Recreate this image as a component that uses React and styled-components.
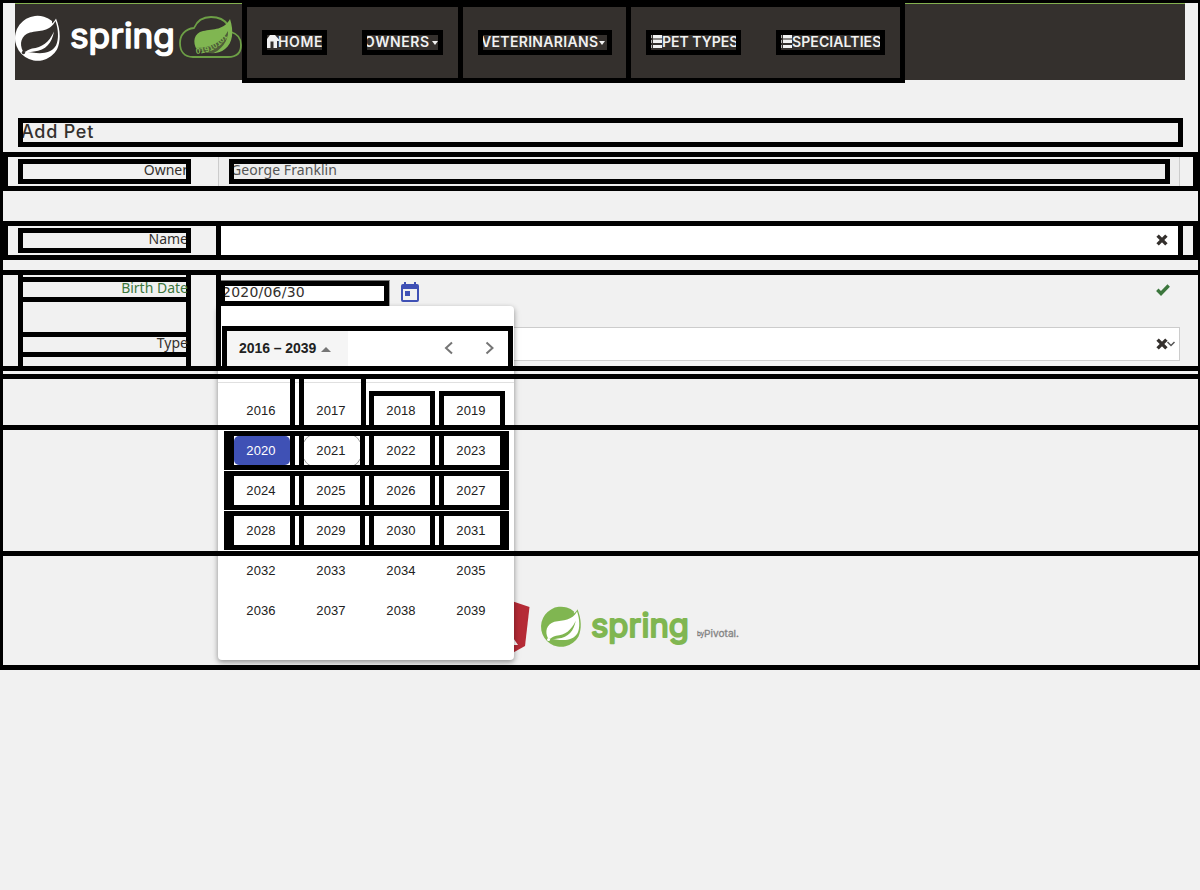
import React from "react";
import styled, { createGlobalStyle, css } from "styled-components";

const Global = createGlobalStyle`
  * { box-sizing: border-box; }
  body { margin: 0; background: #f1f1f1; font-family: "Noto Sans", sans-serif; font-size: 14px; color: #34302d; overflow: hidden; }
`;

const Page = styled.div`
  width: 1200px;
  height: 890px;
`;

const Frame = styled.main`
  position: relative;
  display: flex;
  flex-direction: column;
  height: 670px;
  border: solid #000;
  border-width: 3px 2px 5px 3px;
`;

const Header = styled.header`
  display: flex;
  align-items: flex-start;
  width: 1170px;
  height: 77px;
  flex: none;
  margin-left: 12px;
  border-top: 1px solid #84b04f;
  background: #34302d;
`;

const Brand = styled.div`
  width: 227px;
  height: 76px;
  svg { display: block; }
`;

const Nav = styled.nav`
  display: flex;
  width: 663px;
  height: 80px;
  margin-top: -1px;
  border: 5px solid #000;
  border-top-width: 4px;
`;

const NavGroup = styled.div`
  display: flex;
  gap: 35px;
  width: ${(p) => p.$width}px;
  padding: 23px 0 0 15px;
  flex: none;
  & + & { border-left: 5px solid #000; }
`;

const NavItem = styled.a`
  display: flex;
  align-items: flex-start;
  width: ${(p) => p.$width}px;
  height: 25px;
  flex: none;
  border: 5px solid #000;
  overflow: hidden;
  color: #f1f1f1;
  font: 600 14px/14px Inter, sans-serif;
  white-space: nowrap;
  svg { flex: none; }
`;

const NavText = styled.span`
  margin-left: ${(p) => p.$shift || 0}px;
  letter-spacing: ${(p) => p.$track || 0}px;
`;

const Caret = styled.i`
  flex: none;
  margin: 6px 0 0 ${(p) => p.$gap}px;
  border: 3.5px solid transparent;
  border-top: 4px solid #f1f1f1;
  border-bottom: 0;
`;

const Title = styled.h2`
  width: 1165px;
  height: 29px;
  flex: none;
  margin: 38px 0 0 15px;
  border: 5px solid #000;
  overflow: hidden;
  font: 500 18px/17px Inter, sans-serif;
  letter-spacing: 0.75px;
  text-indent: -2px;
`;

const Row = styled.div`
  display: flex;
  height: 39px;
  flex: none;
  margin-top: ${(p) => p.$top}px;
  padding-left: 10px;
  border: 5px solid #000;
`;

const labelText = css`
  height: 25px;
  color: ${(p) => (p.$valid ? "#3c763d" : "#34302d")};
  line-height: 11px;
  text-align: right;
  overflow: hidden;
  white-space: nowrap;
  span { display: block; margin-right: -2px; }
`;

const Label = styled.label`
  ${labelText}
  width: 173px;
  flex: none;
  margin-top: 2px;
  border: 5px solid #000;
`;

const StackLabel = styled.label`
  ${labelText}
  overflow: visible;
  border: solid #000;
  border-width: 5px 0;
`;

const ReadOnly = styled.div`
  width: 962px;
  margin-left: 27px;
  padding: 2px 0 0 10px;
  border: solid #ccc;
  border-width: 0 1px;
  background: #ededed;
`;

const ReadOnlyValue = styled.div`
  width: 941px;
  height: 25px;
  border: 5px solid #000;
  overflow: hidden;
  color: #555;
  line-height: 11px;
  text-indent: -3px;
  letter-spacing: 0.07px;
`;

const TextField = styled.div`
  display: flex;
  align-items: flex-start;
  justify-content: flex-end;
  width: 967px;
  margin-left: 25px;
  padding: 8px 10px 0 0;
  border: solid #000;
  border-width: 0 5px;
  background: #fff;
`;

const TallRow = styled.div`
  display: flex;
  height: 101px;
  flex: none;
  margin-top: 10px;
  padding-left: 15px;
  border: solid #000;
  border-width: 5px 0;
`;

const LabelColumn = styled.div`
  display: flex;
  flex-direction: column;
  gap: 30px;
  width: 173px;
  padding-top: 2px;
  border: solid #000;
  border-width: 0 5px;
`;

const Fields = styled.div`
  width: 964px;
  margin-left: 25px;
  padding-top: 5px;
  border-left: 5px solid #000;
`;

const DateLine = styled.div`
  display: flex;
  height: 26px;
  svg { flex: none; }
`;

const DateInput = styled.div`
  width: 169px;
  border-top: 1px solid #767676;
  border-right: 1px solid #999;
`;

const DateValue = styled.div`
  height: 25px;
  border: 5px solid #000;
  border-left-width: 4px;
  background: #fff;
  overflow: hidden;
  line-height: 13px;
  letter-spacing: 0.22px;
  text-indent: -3px;
  font-family: "DejaVu Sans", sans-serif;
`;

const Select = styled.div`
  display: flex;
  align-items: center;
  justify-content: flex-end;
  width: 959px;
  height: 34px;
  margin-top: 21px;
  padding-right: 3px;
  border: 1px solid #ccc;
  background: #fff;
`;

const Section = styled.div`
  height: ${(p) => p.$height}px;
  flex: none;
  margin-top: ${(p) => p.$top || 0}px;
  border: solid #000;
  border-width: ${(p) => (p.$top ? "5px 0" : "0 0 5px")};
`;

const Footer = styled.footer`
  height: 109px;
  padding-left: 471px;
  svg { display: block; }
`;

const Picker = styled.section`
  position: absolute;
  left: 215px;
  top: 303px;
  width: 296px;
  height: 354px;
  border-radius: 4px;
  background: #fff;
  box-shadow: 0 2px 5px rgba(0, 0, 0, 0.32), 0 3px 8px rgba(0, 0, 0, 0.12);
  font-family: "Liberation Sans", Arial, sans-serif;
  color: #212121;
`;

const PickerTop = styled.div`
  height: 60px;
  padding: 20px 1px 0 1px;
  border-left: 3px solid #000;
`;

const PickerHeader = styled.div`
  display: flex;
  align-items: center;
  height: 40px;
  padding-right: 9px;
  border: 5px solid #000;
  border-bottom: 0;
  svg { display: block; margin-top: -1px; }
`;

const PeriodButton = styled.div`
  display: flex;
  align-items: center;
  width: 121px;
  height: 35px;
  margin-right: auto;
  padding: 0 0 2px 12px;
  background: #f5f5f5;
  font-size: 14px;
  font-weight: 700;
  letter-spacing: -0.06px;
  white-space: nowrap;
`;

const UpCaret = styled.i`
  margin: 4px 0 0 5px;
  border: 5px solid transparent;
  border-top: 0;
  border-bottom-color: #757575;
`;

const Bar = styled.div`
  height: 5px;
  margin-top: ${(p) => p.$top || 0}px;
  background: #000;
`;

const FirstYears = styled.div`
  display: flex;
  gap: 4px;
  height: 46px;
  padding-left: 11px;
  background: linear-gradient(#e0e0e0, #e0e0e0) 0 3px / 100% 1px no-repeat;
`;

const yearText = css`
  display: flex;
  justify-content: center;
  width: 66px;
  flex: none;
  font-size: 13px;
  line-height: 15px;
  letter-spacing: 0.1px;
`;

const FirstYear = styled.div`
  ${yearText}
  width: ${(p) => p.$width || 66}px;
  height: ${(p) => (p.$boxed ? 34 : 46)}px;
  margin: ${(p) => (p.$boxed ? 12 : 0)}px ${(p) => (p.$width ? -1 : 0)}px 0 0;
  padding: ${(p) => (p.$boxed ? 7 : 24)}px ${(p) => (p.$width ? 3 : 2)}px 0 ${(p) => (p.$open ? 5 : 0)}px;
  border: solid #000;
  border-width: ${(p) => (p.$boxed ? 5 : 0)}px 5px 0 ${(p) => (p.$open ? 0 : 5)}px;
`;

const YearRow = styled.div`
  display: flex;
  gap: 4px;
  width: 285px;
  height: 39px;
  margin: 1px 0 0 6px;
  border: 5px solid #000;
  border-right-width: 4px;
`;

const YearCell = styled.div`
  ${yearText}
  border: solid #000;
  border-width: 0 5px;
`;

const YearPill = styled.span`
  width: 56px;
  height: 29px;
  overflow: hidden;
  display: flex;
  justify-content: center;
  padding: 7px 2px 0 0;
  color: ${(p) => (p.$state === "selected" ? "#fff" : "inherit")};
  background: ${(p) => (p.$state === "selected" ? "#3f51b5" : "transparent")};
  border-radius: ${(p) => (p.$state === "selected" ? "5px" : "0")};
  position: relative;
  &::before {
    content: "";
    display: ${(p) => (p.$state === "today" ? "block" : "none")};
    position: absolute;
    inset: -3px -2px;
    border: 1px solid #9e9e9e;
    border-radius: 15px;
  }
`;

const PlainYears = styled.div`
  display: grid;
  grid-template-columns: repeat(4, 66px);
  grid-auto-rows: 40px;
  column-gap: 4px;
  padding: 7px 0 0 10px;
`;

const PlainYear = styled.span`
  ${yearText}
`;

const HomeIcon = () => (
  <svg width="12" height="15" viewBox="0 0 12 15" fill="#f1f1f1">
    <path d="M0 4 3 0H8L12 4.500V6H10V13H6.500V6.500H3.500V13H0Z" />
  </svg>
);

const ListIcon = () => (
  <svg width="11" height="15" viewBox="0 0 11 15" fill="#f1f1f1">
    <path d="M2 0h9v3H2zM2 5h9v3H2zM2 10h9v3H2z" />
    <path d="M0 0h1v3H0zM0 5h1v3H0zM0 10h1v3H0z" opacity=".7" />
    <path d="M2 3h9v2H2z" opacity=".45" />
  </svg>
);

const RemoveIcon = () => (
  <svg width="12" height="12" viewBox="0 0 12 12">
    <path d="m1.600 1.600 8.800 8.800M10.400 1.600l-8.800 8.800" stroke="#34302d" strokeWidth="3.400" />
  </svg>
);

const CheckIcon = styled.svg`
  margin: 4px 0 0 737px;
`;

const Leaf = ({ disc, leaf }) => (
  <>
    <path d="M37 5.500A22.500 22.500 0 1 0 42 34C46 25 45.500 14 41 3C40 5 39 6 37 8Z" fill={disc} />
    <path d="M40.500 5.500C43.500 14 44 24 41 30C36 38 27 38.500 17 37L8 36C4 28 6 20 15 17C25 15 35 16 40.500 5.500Z" fill={leaf} />
    <path d="M17 33C27 32 34 27 39 16C37 27 31 35 19 36L9 37.500C11 36 13 34 17 33Z" fill={disc} />
    <circle cx="8.500" cy="37" r="1.700" fill={leaf} />
  </>
);

const BrandLogo = () => (
  <svg width="227" height="76" viewBox="0 0 227 76">
    <g transform="translate(0 11.500)"><Leaf disc="#fff" leaf="#34302d" /></g>
    <text x="55" y="44" textLength="105" lengthAdjust="spacingAndGlyphs" fill="#fff" stroke="#fff" strokeWidth="1.500" strokeLinejoin="round" fontFamily="Inter, sans-serif" fontSize="34" fontWeight="400">spring</text>
    <path d="M178 53C169 53 165 47 165 39C165 31 170 25 179 24C182 17 188 13 196 13C203 13 209 15 213 21M216 28C223 30 226 35 226 41C226 49 221 53 213 53H177" fill="none" stroke="#6d9f46" strokeWidth="1.800" />
    <path d="M215 15C219 27 218 39 210 45C203 51 191 50 182 46C177 38 179 29 188 27C199 25 209 26 215 15Z" fill="#80b651" />
    <path id="leaf-band" d="M181 50Q202 49 214 31" fill="none" />
    <path d="M180 44C195 44 207 38 213 27C214 36 206 47 196 50H180Z" fill="#34302d" opacity=".65" />
    <text fill="#80b651" fontFamily="Liberation Sans, sans-serif" fontSize="8.500" fontWeight="700"><textPath href="#leaf-band">01910101</textPath></text>
  </svg>
);

const FooterLogos = () => (
  <svg width="270" height="109" viewBox="474 556 270 109">
    <path d="M500 597 529.500 607 525 646 500 660Z" fill="#b52b36" />
    <path d="M500 619 518 645H508L500 637Z" fill="#fff" />
    <g transform="translate(541 606.500) scale(.89)"><Leaf disc="#80b651" leaf="#fff" /></g>
    <text x="591" y="636.500" textLength="98" lengthAdjust="spacingAndGlyphs" fill="#80b651" stroke="#80b651" strokeWidth="2" strokeLinejoin="round" fontFamily="Inter, sans-serif" fontSize="33" fontWeight="400">spring</text>
    <text x="697" y="636" textLength="7" lengthAdjust="spacingAndGlyphs" fill="#777" stroke="#777" strokeWidth=".3" fontFamily="Open Sans, sans-serif" fontSize="7">by</text>
    <text x="704" y="636.500" textLength="35" lengthAdjust="spacingAndGlyphs" fill="#858585" stroke="#858585" strokeWidth=".3" fontFamily="Inter, sans-serif" fontSize="9.500">Pivotal.</text>
  </svg>
);

const CalendarIcon = styled.svg`
  margin: 2px 0 0 11px;
`;

const ArrowIcon = styled.svg`
  margin-left: ${(p) => p.$gap || 0}px;
`;

const SelectArrow = styled.svg`
  margin-left: -2px;
`;

const yearRows = [
  [2020, 2021, 2022, 2023],
  [2024, 2025, 2026, 2027],
  [2028, 2029, 2030, 2031],
];
const yearState = { 2020: "selected", 2021: "today" };
const laterYears = [2032, 2033, 2034, 2035, 2036, 2037, 2038, 2039];

function YearPicker() {
  return (
    <Picker>
      <PickerTop>
        <PickerHeader>
          <PeriodButton>2016 – 2039<UpCaret /></PeriodButton>
          <ArrowIcon width="20" height="20" viewBox="0 0 20 20"><path d="m13 4.500-6 5.500 6 5.500" fill="none" stroke="#757575" strokeWidth="2" /></ArrowIcon>
          <ArrowIcon $gap={20} width="20" height="20" viewBox="0 0 20 20"><path d="m7.500 4.500 6 5.500-6 5.500" fill="none" stroke="#757575" strokeWidth="2" /></ArrowIcon>
        </PickerHeader>
      </PickerTop>
      <Bar />
      <Bar $top={3} />
      <FirstYears>
        <FirstYear $open>2016</FirstYear>
        <FirstYear $width={67}>2017</FirstYear>
        <FirstYear $boxed>2018</FirstYear>
        <FirstYear $boxed>2019</FirstYear>
      </FirstYears>
      <Bar />
      {yearRows.map((row) => (
        <YearRow key={row[0]}>
          {row.map((y) => (
            <YearCell key={y}><YearPill $state={yearState[y]}>{y}</YearPill></YearCell>
          ))}
        </YearRow>
      ))}
      <Bar $top={1} />
      <PlainYears>
        {laterYears.map((y) => <PlainYear key={y}>{y}</PlainYear>)}
      </PlainYears>
    </Picker>
  );
}

export default function App() {
  return (
    <Page>
      <Global />
      <Frame>
        <Header>
          <Brand><BrandLogo /></Brand>
          <Nav>
            <NavGroup $width={211}>
              <NavItem $width={65}><HomeIcon /><NavText $shift={-1} $track={0.6}>HOME</NavText></NavItem>
              <NavItem $width={81}><NavText $shift={-3} $track={0.6}>OWNERS</NavText><Caret $gap={2} /></NavItem>
            </NavGroup>
            <NavGroup $width={168}>
              <NavItem $width={134}><NavText $shift={-2} $track={0.33}>VETERINARIANS</NavText><Caret $gap={1} /></NavItem>
            </NavGroup>
            <NavGroup $width={274}>
              <NavItem $width={95}><ListIcon /><NavText>PET TYPES</NavText></NavItem>
              <NavItem $width={109}><ListIcon /><NavText $track={0.1}>SPECIALTIES</NavText></NavItem>
            </NavGroup>
          </Nav>
        </Header>
        <Title>Add Pet</Title>
        <Row $top={5}>
          <Label><span>Owner</span></Label>
          <ReadOnly><ReadOnlyValue>George Franklin</ReadOnlyValue></ReadOnly>
        </Row>
        <Row $top={30}>
          <Label><span>Name</span></Label>
          <TextField><RemoveIcon /></TextField>
        </Row>
        <TallRow>
          <LabelColumn>
            <StackLabel $valid><span>Birth Date</span></StackLabel>
            <StackLabel><span>Type</span></StackLabel>
          </LabelColumn>
          <Fields>
            <DateLine>
              <DateInput><DateValue>2020/06/30</DateValue></DateInput>
              <CalendarIcon width="18" height="20" viewBox="0 0 18 20">
                <path d="M3 0h2v2h8V0h2v2h1a2 2 0 0 1 2 2v14a2 2 0 0 1-2 2H2a2 2 0 0 1-2-2V4a2 2 0 0 1 2-2h1ZM2 7v11h14V7ZM4 9h5v5H4Z" fillRule="evenodd" fill="#3f51b5" />
              </CalendarIcon>
              <CheckIcon width="14" height="12" viewBox="0 0 14 12">
                <path d="m1.300 5.800 3.700 3.700L12.700 1.500" fill="none" stroke="#3c763d" strokeWidth="3.400" />
              </CheckIcon>
            </DateLine>
            <Select>
              <RemoveIcon />
              <SelectArrow width="10" height="12" viewBox="0 0 10 12">
                <path d="m1.500 4 3.500 3.500L8.500 4" fill="none" stroke="#555" strokeWidth="1.500" />
              </SelectArrow>
            </Select>
          </Fields>
        </TallRow>
        <Section $top={3} $height={56} />
        <Section $height={126} />
        <Footer><FooterLogos /></Footer>
        <YearPicker />
      </Frame>
    </Page>
  );
}
